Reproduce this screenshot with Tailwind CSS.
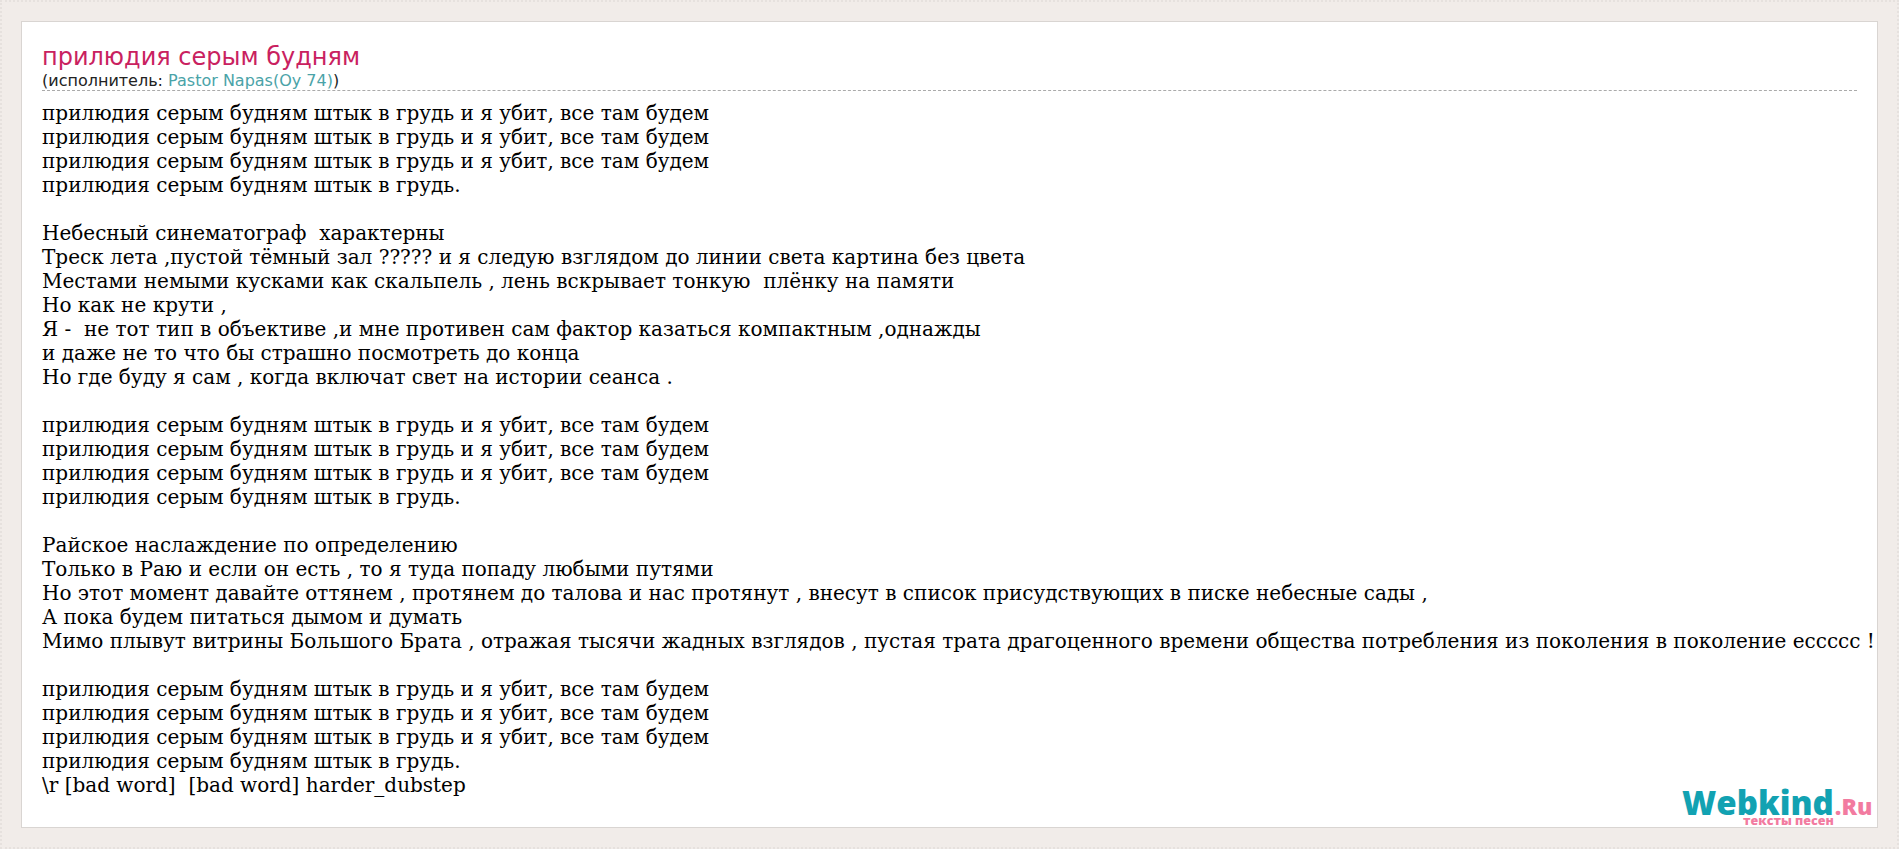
<!DOCTYPE html>
<html lang="ru">
<head>
  <meta charset="UTF-8" />
  <title>прилюдия серым будням</title>
  <script src="https://cdn.jsdelivr.net/npm/@tailwindcss/browser@4"></script>
</head>
<body class="bg-[#f1ece9] h-[849px] overflow-hidden p-[21px] border-2 border-dotted border-[#e6e1de]">
  <div class="relative bg-white border border-[#d9d5d2] h-[807px] -mt-[2px] -ml-[2px] w-[1857px] pt-[20px] pl-[20px] pr-[20px]">
    <h1 class="font-['DejaVu_Sans'] text-[24px] leading-[30px] text-[#c9215f]">прилюдия серым будням</h1>
    <div class="font-['DejaVu_Sans'] text-[16px] leading-[18px] text-[#222] border-b border-dashed border-[#aaa] w-[1815px]">(исполнитель: <a class="text-[#4aa3a8]" href="#">Pastor Napas(Oy 74)</a>)</div>
    <pre class="font-['DejaVu_Serif'] text-[20px] leading-[24px] text-black mt-[10px]">прилюдия серым будням штык в грудь и я убит, все там будем
прилюдия серым будням штык в грудь и я убит, все там будем
прилюдия серым будням штык в грудь и я убит, все там будем
прилюдия серым будням штык в грудь.

Небесный синематограф  характерны
Треск лета ,пустой тёмный зал ????? и я следую взглядом до линии света картина без цвета
Местами немыми кусками как скальпель , лень вскрывает тонкую  плёнку на памяти
Но как не крути ,
Я -  не тот тип в объективе ,и мне противен сам фактор казаться компактным ,однажды
и даже не то что бы страшно посмотреть до конца
Но где буду я сам , когда включат свет на истории сеанса .

прилюдия серым будням штык в грудь и я убит, все там будем
прилюдия серым будням штык в грудь и я убит, все там будем
прилюдия серым будням штык в грудь и я убит, все там будем
прилюдия серым будням штык в грудь.

Райское наслаждение по определению
Только в Раю и если он есть , то я туда попаду любыми путями
Но этот момент давайте оттянем , протянем до талова и нас протянут , внесут в список присудствующих в писке небесные сады ,
А пока будем питаться дымом и думать
Мимо плывут витрины Большого Брата , отражая тысячи жадных взглядов , пустая трата драгоценного времени общества потребления из поколения в поколение ессссс !

прилюдия серым будням штык в грудь и я убит, все там будем
прилюдия серым будням штык в грудь и я убит, все там будем
прилюдия серым будням штык в грудь и я убит, все там будем
прилюдия серым будням штык в грудь.
\r [bad word]  [bad word] harder_dubstep</pre>
    <div class="absolute left-[1660px] top-[765px] flex items-baseline font-['Open_Sans'] font-extrabold leading-[32px]">
      <span class="text-[33px] text-[#12a2b2]">Webkind</span>
      <span class="text-[23px] ml-[1px] text-[#f27ba0]">.Ru</span>
    </div>
    <span class="absolute left-[1721px] top-[792px] font-['Open_Sans'] font-extrabold text-[12.5px] leading-[13px] text-[#f27ba0]">тексты песен</span>
  </div>
</body>
</html>
